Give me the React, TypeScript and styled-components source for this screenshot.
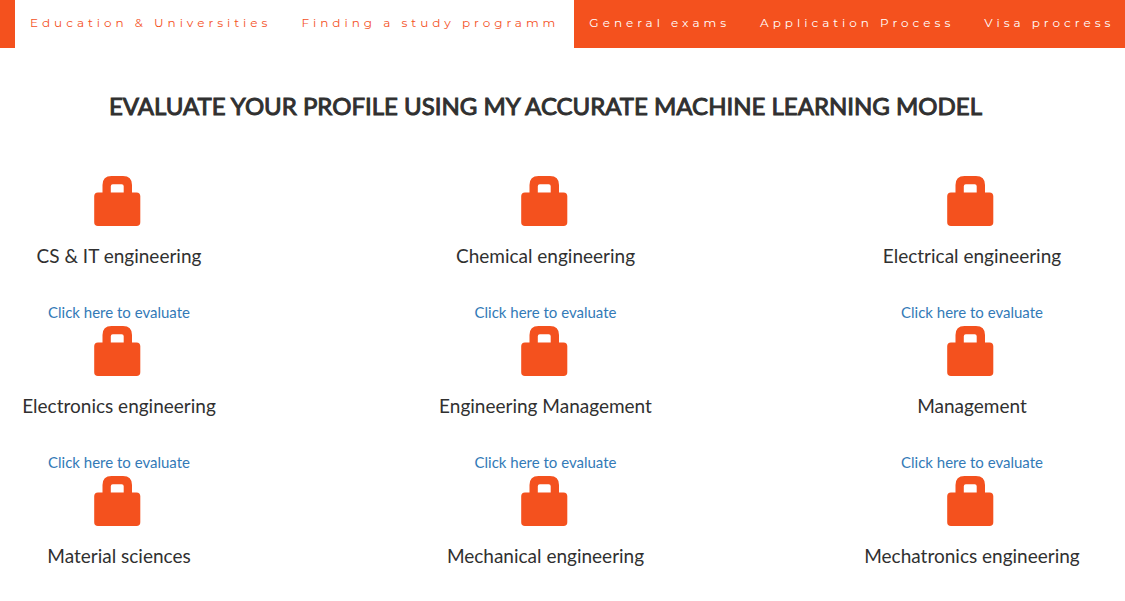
import React from "react";
import styled, { createGlobalStyle } from "styled-components";

const ORANGE = "#f4511e";

const GlobalStyle = createGlobalStyle`
  * { box-sizing: border-box; }
  body {
    margin: 0;
    background: #fff;
    color: #303030;
    font-family: Lato, sans-serif;
    font-size: 15px;
    line-height: 27px;
    overflow-x: hidden;
  }
`;

const Navbar = styled.nav`
  background: ${ORANGE};
  height: 48px;
  padding-left: 15px;
  overflow: hidden;
`;

const NavList = styled.ul`
  display: flex;
  margin: 0;
  padding: 0;
  list-style: none;
`;

const NavLink = styled.a<{ $active?: boolean }>`
  display: block;
  padding: 13px 15px 15px;
  font-family: Montserrat, "Open Sans", sans-serif;
  font-size: 12px;
  line-height: 20px;
  letter-spacing: 4px;
  white-space: nowrap;
  text-decoration: none;
  color: ${(p) => (p.$active ? ORANGE : "#fff")};
  background: ${(p) => (p.$active ? "#fff" : "transparent")};
`;

const Section = styled.main`
  padding: 40px 34px 0 0;
  text-align: center;
`;

const Title = styled.h2`
  margin: 0 0 52px;
  font-size: 24px;
  line-height: 36px;
  font-weight: 400;
  -webkit-text-stroke: 1px currentColor;
  text-transform: uppercase;
`;

const Grid = styled.div`
  display: grid;
  grid-template-columns: repeat(3, 238px);
  justify-content: space-between;
`;

const Card = styled.article`
  display: flex;
  flex-direction: column;
  align-items: center;
`;

const LockIcon = styled.svg`
  display: block;
  width: 56px;
  height: 50px;
  fill: ${ORANGE};
`;

const Name = styled.h4`
  margin: 17px 0 30px;
  font-size: 19px;
  line-height: 26px;
  font-weight: 400;
`;

const EvaluateLink = styled.a`
  color: #337ab7;
  text-decoration: none;
`;

const navItems = [
  { label: "Education & Universities", active: true },
  { label: "Finding a study programm", active: true },
  { label: "General exams" },
  { label: "Application Process" },
  { label: "Visa procress" },
];

const fields = [
  "CS & IT engineering",
  "Chemical engineering",
  "Electrical engineering",
  "Electronics engineering",
  "Engineering Management",
  "Management",
  "Material sciences",
  "Mechanical engineering",
  "Mechatronics engineering",
];

const Lock = () => (
  <LockIcon viewBox="0 0 56 50" aria-hidden="true">
    <path
      fillRule="evenodd"
      d="M11.500 16.500V9Q11.500 0 20.500 0H32Q41 0 41 9V16.500H45.500Q49.300 16.500 49.300 20.300V46.200Q49.300 50 45.500 50H7Q3.200 50 3.200 46.200V20.300Q3.200 16.500 7 16.500ZM19.800 16.500H32.700V10.300Q32.700 8.300 30.700 8.300H21.800Q19.800 8.300 19.800 10.300Z"
    />
  </LockIcon>
);

export default function App() {
  return (
    <>
      <GlobalStyle />
      <Navbar>
        <NavList>
          {navItems.map((item) => (
            <li key={item.label}>
              <NavLink href="#" $active={item.active}>
                {item.label}
              </NavLink>
            </li>
          ))}
        </NavList>
      </Navbar>
      <Section>
        <Title>Evaluate your profile using my accurate machine learning model</Title>
        <Grid>
          {fields.map((field, i) => (
            <Card key={field}>
              <Lock />
              <Name>{field}</Name>
              {i < 6 && <EvaluateLink href="#">Click here to evaluate</EvaluateLink>}
            </Card>
          ))}
        </Grid>
      </Section>
    </>
  );
}
